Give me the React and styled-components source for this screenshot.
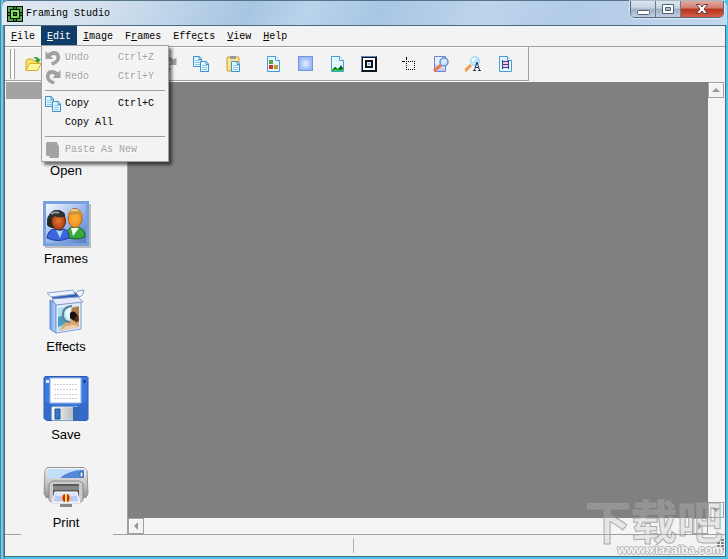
import styled, { createGlobalStyle, css } from "styled-components";

const GlobalStyle = createGlobalStyle`
  * {
    box-sizing: border-box;
  }

  body {
    margin: 0;
    font-family: "Liberation Mono", "Noto Sans CJK SC", monospace;
    font-size: 10px;
    color: #000;
    background: #f3f3f3;
  }

  button {
    margin: 0;
    padding: 0;
    border: 0;
    background: none;
    font: inherit;
    color: inherit;
  }

  svg {
    display: block;
  }
`;

const Window = styled.div`
  position: relative;
  display: flex;
  flex-direction: column;
  min-height: 100vh;
  padding: 0 2px 2px 4px;
  overflow: hidden;
  background: linear-gradient(90deg, #16789c 0, #9fdcea 2px, #2d7fa4 4px, #46c8ee 5px);
`;

const TitleBar = styled.header`
  display: flex;
  align-items: flex-start;
  height: 25px;
  margin: 0 -1px 0 -2px;
  padding: 0 3px 0 5px;
  border-top: 1px solid #54748a;
  border-radius: 6px 6px 0 0;
  background: linear-gradient(
    115deg,
    #e1e9f1 0%,
    #d3e0ee 14%,
    #bdd3e9 24%,
    #a7c5e2 34%,
    #b9d3eb 42%,
    #a8c6e4 52%,
    #bdd4eb 66%,
    #b2cbe8 78%,
    #c3d7ee 100%
  );
`;

const WindowTitle = styled.h1`
  display: flex;
  align-items: center;
  gap: 3px;
  flex: 1;
  height: 26px;
  margin: 0;
  font-size: 10px;
  font-weight: normal;
  line-height: 12px;
`;

const WindowControls = styled.div`
  display: flex;
  height: 17px;
  border: 1px solid #56677c;
  border-top: 0;
  border-radius: 0 0 5px 5px;
  overflow: hidden;
  box-shadow: 0 0 0 1px rgba(255, 255, 255, 0.5);
`;

const ControlButton = styled.button`
  display: flex;
  align-items: center;
  justify-content: center;
  width: ${({ $close }) => ($close ? "42px" : "25px")};
  height: 16px;
  border-right: ${({ $close }) => ($close ? "0" : "1px solid #6c7d92")};
  background: ${({ $close }) =>
    $close
      ? "linear-gradient(#e4aaa0 0%, #d07c6f 45%, #b8301c 50%, #d2624a 100%)"
      : "linear-gradient(#dce6f0 0%, #c3d0de 45%, #9fb0c3 50%, #c0d0e2 100%)"};
`;

const Client = styled.div`
  display: flex;
  flex-direction: column;
  flex: 1;
  border: 1px solid #4c6a80;
  background: #f3f3f3;
`;

const MenuBar = styled.nav`
  display: flex;
  height: 20px;
`;

const MenuEntry = styled.div`
  position: relative;
`;

const MenuButton = styled.button`
  height: 20px;
  padding: 2px 6px 0;
  line-height: 18px;
  ${({ $open }) =>
    $open &&
    css`
      color: #fff;
      background: #123c68;
    `}
`;

const Dropdown = styled.div`
  position: absolute;
  z-index: 2;
  top: 100%;
  left: 0;
  width: 128px;
  margin-top: -1px;
  padding: 2px 3px;
  border: 1px solid #a0a0a0;
  background: #f3f3f3;
  box-shadow: 3px 3px 3px rgba(0, 0, 0, 0.55);
`;

const DropdownItem = styled.button`
  display: grid;
  grid-template-columns: 20px 53px 1fr;
  align-items: center;
  width: 100%;
  height: 19px;
  text-align: left;
  white-space: nowrap;
  color: #000;

  &:disabled {
    color: #a2a2a2;
    text-shadow: 1px 1px 0 #fff;
  }
`;

const Separator = styled.hr`
  height: 1px;
  margin: 4px 0 3px;
  border: 0;
  background: #a0a0a0;
`;

const ToolRow = styled.div`
  display: flex;
  height: 36px;
  border-top: 1px solid #a0a0a0;
`;

const ToolBar = styled.div`
  display: flex;
  align-items: center;
  height: 34px;
  padding: 0 7px 0 5px;
  border: 1px solid #a0a0a0;
  border-width: 0 1px 1px 0;
  box-shadow: inset 0 1px 0 #fff, 0 1px 0 #fff;
`;

const Grip = styled.span`
  width: 5px;
  height: 30px;
  margin-right: 2px;
  border: 1px solid #a0a0a0;
  border-width: 0 1px;
  background: #fff;
`;

const ToolButton = styled.button`
  display: flex;
  align-items: center;
  justify-content: center;
  width: 32px;
  height: 32px;
  margin-left: ${({ $group }) => ($group ? "8px" : "0")};
`;

const Body = styled.main`
  display: grid;
  grid-template-columns: 122px 1fr;
  flex: 1;
`;

const Sidebar = styled.aside`
  display: flex;
  flex-direction: column;
  align-items: center;
`;

const SidebarHeader = styled.div`
  align-self: stretch;
  height: 17px;
  margin: 0 0 13px 1px;
  background: #a3a3a3;
`;

const SidebarButton = styled.button`
  display: flex;
  flex-direction: column;
  align-items: center;
  gap: 3px;
  width: 92px;
  height: 67px;
  margin-bottom: 21px;
  font-family: "Liberation Sans", Arial, sans-serif;
  font-size: 13px;
  line-height: 16px;

  &:last-child {
    margin-bottom: 3px;
  }
`;

const Workspace = styled.section`
  display: grid;
  grid-template-columns: 1fr 17px;
  grid-template-rows: 1fr 16px;
  border-left: 1px solid #a0a0a0;
`;

const Canvas = styled.div`
  background: #808080;
`;

const ScrollBar = styled.div`
  display: flex;
  flex-direction: ${({ $vertical }) => ($vertical ? "column" : "row")};
  justify-content: space-between;
  padding-right: ${({ $vertical }) => ($vertical ? "1px" : "0")};
  background: #f4f4f4;
`;

const ScrollButton = styled.button`
  display: flex;
  align-items: center;
  justify-content: center;
  width: 16px;
  height: 16px;
  border: 1px solid #a0a0a0;
  box-shadow: inset 1px 1px 0 #fff;
  background: #f3f3f3;
`;

const StatusBar = styled.footer`
  display: flex;
  align-items: center;
  justify-content: space-between;
  height: 22px;
  background: linear-gradient(90deg, #a0a0a0 16px, #f3f3f3 16px, #f3f3f3 108px, #a0a0a0 108px) top /
    100% 1px no-repeat;
`;

const StatusPane = styled.span`
  width: 349px;
  height: 15px;
  border-right: 1px solid #b4b4b4;
`;

const Watermark = styled.div`
  position: absolute;
  z-index: 3;
  right: 5px;
  bottom: 2px;
  display: flex;
  flex-direction: column;
  align-items: flex-end;
  pointer-events: none;
`;

const WatermarkName = styled.span`
  font-family: "Noto Sans CJK SC", sans-serif;
  font-size: 46px;
  font-weight: bold;
  line-height: 48px;
  color: rgba(200, 200, 200, 0.3);
  -webkit-text-stroke: 1px rgba(155, 155, 155, 0.8);
`;

const WatermarkUrl = styled.span`
  font-family: "Liberation Sans", Arial, sans-serif;
  font-size: 12px;
  font-weight: bold;
  line-height: 14px;
  color: #f6f6f6;
  text-shadow: 1px 0 #b2b2b2, -1px 0 #b2b2b2, 0 1px #b2b2b2, 0 -1px #b2b2b2;
`;

const LogoIcon = () => (
  <svg width="16" height="16" viewBox="0 0 16 16" shapeRendering="crispEdges">
    <rect width="16" height="16" fill="#061006" />
    <path d="M1 1h5v2H3v3H1zM10 1h5v5h-2V3h-3zM13 10h2v5h-5v-2h3zM1 10h2v3h3v2H1z" fill="#58a957" />
    <path d="M4 4h8v8H4zM6 6v4h4V6z" fill="#7fdc5c" fillRule="evenodd" />
    <path d="M7 7h2v2H7z" fill="#2c6a2e" />
    <path d="M7 1h2v2H7zM7 13h2v2H7zM1 7h2v2H1zM13 7h2v2h-2z" fill="#2f8a36" />
  </svg>
);

const MinimizeIcon = () => (
  <svg width="13" height="15" viewBox="0 0 13 15">
    <rect x=".5" y="8.500" width="12" height="4" rx="1" fill="#fff" stroke="#53606f" />
  </svg>
);

const MaximizeIcon = () => (
  <svg width="12" height="11" viewBox="0 0 12 11">
    <path
      d="M.5.5h11v9H.5zM3.500 3.500v3h5v-3z"
      fill="#fff"
      fillRule="evenodd"
      stroke="#53606f"
    />
  </svg>
);

const CloseIcon = () => (
  <svg width="14" height="11" viewBox="0 0 14 11">
    <path
      d="M1.500.5h3.500L7 3 9 .5h3.500L9 5l3.500 4.500H9L7 7 5 9.500H1.500L5 5z"
      fill="#fff"
      stroke="#6b3d42"
    />
  </svg>
);

const UndoIcon = ({ flip }) => (
  <svg width="16" height="16" viewBox="0 0 16 16">
    <g transform={flip ? "translate(16 0) scale(-1 1)" : undefined}>
      <path d="M.5 1L3 3.500C6 .5 11.500 0 14 3.500c3 4.500 0 10-6.500 12l-1.500-3c4.500-1.500 6.500-4 5-6.500C9.800 4.300 7.500 4.700 6 6.500L8.500 9H.5z" fill="#a1a1a1" />
    </g>
  </svg>
);

const OpenIcon = () => (
  <svg width="17" height="16" viewBox="0 0 17 16">
    <path d="M1 14V4.500L3 3h4l1.500 2H14v3" fill="#fbe36a" stroke="#d0a42a" />
    <path d="M1 14.500L4.500 7.500H16L12.500 14.500z" fill="#fff59a" stroke="#d8aa25" />
    <path d="M8 2c3-2 5-1 6 1h2l-3.500 4L10 4h2c-1-1-2-2-4-2z" fill="#2c9a36" />
  </svg>
);

const Sheet = ({ x = 0, y = 0 }) => (
  <g transform={`translate(${x} ${y})`}>
    <path d="M.5.5h6l2 2.500v7.500h-8z" fill="#e3f5fd" stroke="#3f92d2" />
    <path d="M6 1v2.500h2.500" fill="none" stroke="#3f92d2" />
    <path d="M2 4.500h5M2 6.500h5M2 8.500h5" stroke="#8ecbed" />
  </g>
);

const CopyIcon = () => (
  <svg width="17" height="16" viewBox="0 0 17 16">
    <Sheet />
    <Sheet x={7} y={5} />
  </svg>
);

const PasteIcon = () => (
  <svg width="15" height="16" viewBox="0 0 15 16">
    <rect x="1" y="1" width="12" height="14" rx="1" fill="#fbe58c" stroke="#c9992d" />
    <path d="M4 0h6v3H4z" fill="#9b9b9b" />
    <Sheet x={5} y={5} />
  </svg>
);

const ShadowClipboardIcon = () => (
  <svg width="16" height="16" viewBox="0 0 16 16">
    <path d="M2 0h10l1 3 1 1v11l-1 1H5l-1-2H2L1 13V1z" fill="#a3a3a3" />
  </svg>
);

const PageShape = () => (
  <>
    <path d="M1.500.5h8l4 4v11h-12z" fill="#e2f8fe" stroke="#4b9bd6" />
    <path d="M9.500.5v4h4" fill="#fff" stroke="#4b9bd6" />
  </>
);

const PaletteIcon = () => (
  <svg width="15" height="16" viewBox="0 0 15 16">
    <PageShape />
    <path d="M3 4h4v4H3z" fill="#4da83f" />
    <path d="M3 9h4v4H3z" fill="#c9352a" />
    <path d="M8 9h4v4H8z" fill="#c29a22" />
  </svg>
);

const GlowIcon = () => (
  <svg width="15" height="15" viewBox="0 0 15 15">
    <defs>
      <radialGradient id="glow">
        <stop offset="0" stopColor="#e6f0ff" />
        <stop offset="1" stopColor="#94b4fa" />
      </radialGradient>
    </defs>
    <rect x=".5" y=".5" width="14" height="14" fill="url(#glow)" stroke="#7b94dc" />
    <rect x="2.500" y="2.500" width="10" height="10" fill="none" stroke="#a4bdfb" />
  </svg>
);

const PictureIcon = () => (
  <svg width="15" height="16" viewBox="0 0 15 16">
    <PageShape />
    <path d="M2 14l3.500-3 2 2L11 10l2 2v3H2z" fill="#0f8a22" />
    <path d="M2 15l3-2 3 1 5-2v3z" fill="#19dc36" />
    <path d="M5 11l2 2H3zM11 9l2 4-4 1z" fill="#075313" />
  </svg>
);

const FrameIcon = () => (
  <svg width="16" height="16" viewBox="0 0 16 16">
    <rect width="16" height="16" fill="#10151f" />
    <path d="M.5 15.500V.5h15" fill="none" stroke="#6187b7" />
    <rect x="3" y="3" width="10" height="10" fill="#10151f" stroke="#fff" strokeWidth="2" />
    <rect x="6.500" y="6.500" width="3" height="3" fill="#9bb1d3" stroke="#dce8f5" />
  </svg>
);

const MarqueeIcon = () => (
  <svg width="14" height="14" viewBox="0 0 14 14" shapeRendering="crispEdges">
    <path
      d="M4 4.500h10M4 12.500h10M4.500 4v9M12.500 4v9"
      fill="none"
      stroke="#000"
      strokeDasharray="1 1"
    />
    <path d="M4.500 0v3M0 4.500h3" stroke="#000" />
  </svg>
);

const PreviewIcon = () => (
  <svg width="16" height="16" viewBox="0 0 16 16">
    <path d="M1.500.5h11v15h-11z" fill="#e6edff" stroke="#7283ce" />
    <path d="M2 15V8l10 5v2z" fill="#c5c9f6" />
    <circle cx="11" cy="6" r="4" fill="#c1e3fa" stroke="#6293d6" strokeWidth="1.500" />
    <path d="M9 5l2-2M10 7l3-3" stroke="#fff" />
    <path d="M1 15l7-6" stroke="#e77c48" strokeWidth="3" />
  </svg>
);

const ZoomTextIcon = () => (
  <svg width="16" height="16" viewBox="0 0 16 16">
    <circle cx="10" cy="5" r="4.500" fill="#bde7fa" stroke="#9bd3f0" />
    <path d="M7 5l3-3" stroke="#fff" strokeWidth="2" />
    <path d="M0 15l6-6" stroke="#f29a48" strokeWidth="3" />
    <path d="M8 14.500h3M13 14.500h3M9.500 14l2.500-8 2.500 8M10.500 11.500h3" fill="none" stroke="#24355e" />
  </svg>
);

const FilmIcon = () => (
  <svg width="15" height="16" viewBox="0 0 15 16">
    <PageShape />
    <path d="M5 5h5v7H5z" fill="#f2c9ef" />
    <path d="M4.500 4v9M10.500 4v9M4.500 5.500h6M4.500 8.500h6M4.500 11.500h6" stroke="#3a3f86" />
  </svg>
);

const ArrowIcon = ({ direction }) => {
  const paths = {
    up: "M0 6h8L4 2z",
    down: "M0 2h8L4 6z",
    left: "M6 0v8L2 4z",
    right: "M2 0v8l4-4z",
  };
  return (
    <svg width="8" height="8" viewBox="0 0 8 8">
      <path d={paths[direction]} fill="#979797" />
    </svg>
  );
};

const FolderLargeIcon = () => (
  <svg width="48" height="48" viewBox="0 0 48 48">
    <path d="M4 40V10h14l4 5h20v25z" fill="#f3cd55" stroke="#bd8d1e" />
    <path d="M4 40l7-19h34l-6 19z" fill="#ffe88a" stroke="#bd8d1e" />
  </svg>
);

const PeopleIcon = () => (
  <svg width="50" height="48" viewBox="0 0 50 48">
    <defs>
      <linearGradient id="portrait" x1="0" y1="0" x2="1" y2="1">
        <stop offset="0" stopColor="#f6f9ff" />
        <stop offset=".45" stopColor="#a7bff2" />
        <stop offset="1" stopColor="#547cc8" />
      </linearGradient>
      <radialGradient id="darkSkin">
        <stop offset="0" stopColor="#e9762f" />
        <stop offset="1" stopColor="#a43f14" />
      </radialGradient>
      <radialGradient id="lightSkin">
        <stop offset="0" stopColor="#ffb23f" />
        <stop offset="1" stopColor="#f28e1c" />
      </radialGradient>
    </defs>
    <rect x="4" y="4" width="46" height="44" fill="#bdbdbd" />
    <rect x="2" y="1" width="46" height="45" fill="#78a0dc" />
    <rect x="5" y="4" width="40" height="39" fill="url(#portrait)" />
    <path d="M25 37q0-8 6-10h6q8 3 7 10-9 4-19 0z" fill="#38a83a" stroke="#176324" />
    <path d="M30 28l2 8 6-8z" fill="#f2fbef" />
    <ellipse cx="34" cy="18" rx="7" ry="9.500" fill="url(#lightSkin)" stroke="#a26b1c" />
    <path d="M27 16q0-7 7-7t8 7q-7-4-15 0z" fill="#c99439" />
    <path d="M30 11q4-2 7 0" fill="none" stroke="#e9cf8e" strokeWidth="2" />
    <path d="M6 25q-1-10 6-14 7-3 12 3v8l-8 6h-5q-4-1-5-3z" fill="#252525" />
    <ellipse cx="17.500" cy="21" rx="7" ry="9" fill="url(#darkSkin)" stroke="#57200a" />
    <path d="M7 19q2-9 9-9 8 1 8 7-7 1-11-1-1 4-6 3z" fill="#303030" />
    <path d="M10 14q4-3 8-1" fill="none" stroke="#999" strokeWidth="2" />
    <path d="M6 38q1-8 7-9l5 2 5-2q5 2 5 9-11 5-22 0z" fill="#3c67e0" stroke="#1b3b99" />
    <path d="M15 30l4 8 3-8-3 1z" fill="#acdcf8" />
  </svg>
);

const BoxIcon = () => (
  <svg width="40" height="46" viewBox="0 0 40 46">
    <defs>
      <linearGradient id="boxSide">
        <stop offset="0" stopColor="#6f9be8" />
        <stop offset="1" stopColor="#c4d9fb" />
      </linearGradient>
    </defs>
    <path d="M4 11l6 4v29l-6-4z" fill="url(#boxSide)" stroke="#6089d2" />
    <path d="M10 14l25-2v28l-25 4z" fill="#dfeaff" stroke="#7f9fd8" />
    <path d="M5 7l24-4 4 5-25 4z" fill="#2d5cba" />
    <path d="M1 4l26-3 2 4L5 8z" fill="#eef2fc" stroke="#8ca3d0" />
    <path d="M6 10l26-2 5 5-27 3z" fill="#e6ecfc" stroke="#8299c8" />
    <path d="M30 4l2-2 6-1-1 4-3 3z" fill="#f2f5ff" stroke="#8299c8" />
    <path d="M12 19l21-2v21l-21 4z" fill="#a9e0ee" />
    <path d="M12 28q5-2 9-1l4 5-13 6z" fill="#4c9cc0" />
    <path d="M14 42q3-9 9-10l-3-12 13-3v21z" fill="#d9a878" />
    <path d="M22 25q2-8 11-7v15q-6 0-11-8z" fill="#b67b45" />
    <path d="M14 42l6-5 9-1 4 2z" fill="#efcfa9" />
    <path d="M26 17q-10 1-9 10 1 6 7 6" fill="#c3edf5" stroke="#617f92" strokeWidth="2" />
    <path d="M20 22q2-3 5-4l-2 12q-4-3-3-8z" fill="#e6fbfc" />
    <path d="M24 24q3-3 6 0l2 3-4 5-4-3z" fill="#1c120d" />
    <path d="M28 30l4-4 1 5-3 3z" fill="#583217" />
  </svg>
);

const FloppyIcon = () => (
  <svg width="46" height="48" viewBox="0 0 46 48">
    <defs>
      <linearGradient id="shutter">
        <stop offset="0" stopColor="#fff" />
        <stop offset="1" stopColor="#a5abaf" />
      </linearGradient>
    </defs>
    <path d="M2 .5h42l1 1v42l-2 1H4l-3-2V2z" fill="#3b7ae0" stroke="#2857b5" />
    <path d="M2 26v16l3 2h37l2-2V24q-8 8-21 5-11 2-21-3z" fill="#346bc8" />
    <path d="M7 2h31v25H7z" fill="#fff" stroke="#94b0df" />
    <path d="M11 8.500h23M11 13.500h23M11 18.500h23M11 22.500h23" stroke="#c9ccd2" strokeDasharray="2 1" />
    <path d="M3 4h3v3H3z" fill="#e9efff" />
    <path d="M40 4h3v3h-3z" fill="#1f469c" />
    <path d="M9 31h26v13H9z" fill="url(#shutter)" stroke="#d9e2ed" />
    <path d="M12 33h5v10h-5z" fill="#3975c7" stroke="#1f5399" />
    <path d="M30 31h6v14h-6z" fill="#3468ba" />
  </svg>
);

const PrinterIcon = () => (
  <svg width="48" height="44" viewBox="0 0 48 44">
    <defs>
      <linearGradient id="printerBody" x2="0" y2="1">
        <stop offset="0" stopColor="#fafafa" />
        <stop offset="1" stopColor="#929292" />
      </linearGradient>
    </defs>
    <path d="M5 1.500h37l3 3 1 23-2 4H4l-2-4 1-23z" fill="url(#printerBody)" stroke="#949494" />
    <path d="M5 3h37v9H5z" fill="#c3def9" />
    <path d="M18 12q9-8 24-8v8z" fill="#5389d8" />
    <path d="M38 6h3v5h-3z" fill="#eee" stroke="#2f69ad" />
    <path d="M10 15h28l3 3v16l-3 3H10l-3-3V18z" fill="#cacaca" stroke="#8a8a8a" />
    <path d="M11 18h26v16H11z" fill="#5b5b5b" />
    <path d="M11 20h26v4H11z" fill="#868686" />
    <path d="M13 26h22l3 11H10z" fill="#dae5fa" stroke="#fff" />
    <path d="M13 30h22l1 5H12z" fill="#b9cbf1" />
    <path d="M18 38h12v3H18z" fill="#898989" />
    <circle cx="24" cy="32" r="4" fill="#cf251c" />
    <path d="M24 28v8" stroke="#ffe443" strokeWidth="2" />
    <path d="M21 29q-2 3 0 6M27 29q2 3 0 6" fill="none" stroke="#ffac27" />
  </svg>
);

const ResizeIcon = () => (
  <svg width="13" height="12" viewBox="0 0 13 12" shapeRendering="crispEdges">
    <path d="M9 1h4M5 4h8M5 7h8M1 10h12" stroke="#7d8187" strokeWidth="2" strokeDasharray="3 1" />
  </svg>
);

const menus = [
  { before: "", key: "F", after: "ile" },
  { before: "", key: "E", after: "dit", open: true },
  { before: "", key: "I", after: "mage" },
  { before: "F", key: "r", after: "ames" },
  { before: "Effe", key: "c", after: "ts" },
  { before: "", key: "V", after: "iew" },
  { before: "", key: "H", after: "elp" },
];

const editItems = [
  { label: "Undo", shortcut: "Ctrl+Z", icon: <UndoIcon />, disabled: true },
  { label: "Redo", shortcut: "Ctrl+Y", icon: <UndoIcon flip />, disabled: true },
  null,
  { label: "Copy", shortcut: "Ctrl+C", icon: <CopyIcon /> },
  { label: "Copy All" },
  null,
  { label: "Paste As New", icon: <ShadowClipboardIcon />, disabled: true },
];

const tools = [
  { name: "Open", icon: <OpenIcon /> },
  { name: "Save" },
  { name: "Print" },
  { name: "Undo", icon: <UndoIcon />, group: true },
  { name: "Redo", icon: <UndoIcon flip /> },
  { name: "Copy", icon: <CopyIcon /> },
  { name: "Paste", icon: <PasteIcon /> },
  { name: "Colors", icon: <PaletteIcon />, group: true },
  { name: "Glow", icon: <GlowIcon /> },
  { name: "Picture", icon: <PictureIcon /> },
  { name: "Frame", icon: <FrameIcon /> },
  { name: "Select", icon: <MarqueeIcon />, group: true },
  { name: "Preview", icon: <PreviewIcon /> },
  { name: "Zoom", icon: <ZoomTextIcon /> },
  { name: "Film", icon: <FilmIcon /> },
];

const sections = [
  { label: "Open", icon: <FolderLargeIcon /> },
  { label: "Frames", icon: <PeopleIcon /> },
  { label: "Effects", icon: <BoxIcon /> },
  { label: "Save", icon: <FloppyIcon /> },
  { label: "Print", icon: <PrinterIcon /> },
];

const IconSlot = styled.span`
  display: flex;
  align-items: center;
  justify-content: center;
  height: 48px;
`;

const EditMenu = () => (
  <Dropdown role="menu">
    {editItems.map((item, i) =>
      item ? (
        <DropdownItem key={item.label} role="menuitem" disabled={item.disabled}>
          <span>{item.icon}</span>
          <span>{item.label}</span>
          <span>{item.shortcut}</span>
        </DropdownItem>
      ) : (
        <Separator key={i} />
      )
    )}
  </Dropdown>
);

const App = () => {
  return (
    <Window>
      <GlobalStyle />
      <TitleBar>
        <WindowTitle>
          <LogoIcon />
          Framing Studio
        </WindowTitle>
        <WindowControls>
          <ControlButton aria-label="Minimize">
            <MinimizeIcon />
          </ControlButton>
          <ControlButton aria-label="Maximize">
            <MaximizeIcon />
          </ControlButton>
          <ControlButton $close aria-label="Close">
            <CloseIcon />
          </ControlButton>
        </WindowControls>
      </TitleBar>

      <Client>
        <MenuBar>
          {menus.map(({ before, key, after, open }) => (
            <MenuEntry key={before + key + after}>
              <MenuButton $open={open}>
                {before}
                <u>{key}</u>
                {after}
              </MenuButton>
              {open && <EditMenu />}
            </MenuEntry>
          ))}
        </MenuBar>

        <ToolRow>
          <ToolBar>
            <Grip />
            {tools.map(({ name, icon, group }) => (
              <ToolButton key={name} $group={group} aria-label={name}>
                {icon}
              </ToolButton>
            ))}
          </ToolBar>
        </ToolRow>

        <Body>
          <Sidebar>
            <SidebarHeader />
            {sections.map(({ label, icon }) => (
              <SidebarButton key={label}>
                <IconSlot>{icon}</IconSlot>
                {label}
              </SidebarButton>
            ))}
          </Sidebar>
          <Workspace>
            <Canvas />
            <ScrollBar $vertical>
              <ScrollButton aria-label="Scroll up">
                <ArrowIcon direction="up" />
              </ScrollButton>
              <ScrollButton aria-label="Scroll down">
                <ArrowIcon direction="down" />
              </ScrollButton>
            </ScrollBar>
            <ScrollBar>
              <ScrollButton aria-label="Scroll left">
                <ArrowIcon direction="left" />
              </ScrollButton>
              <ScrollButton aria-label="Scroll right">
                <ArrowIcon direction="right" />
              </ScrollButton>
            </ScrollBar>
          </Workspace>
        </Body>

        <StatusBar>
          <StatusPane />
          <ResizeIcon />
        </StatusBar>
      </Client>

      <Watermark>
        <WatermarkName>下载吧</WatermarkName>
        <WatermarkUrl>www.xiazaiba.com</WatermarkUrl>
      </Watermark>
    </Window>
  );
};

export default App;
